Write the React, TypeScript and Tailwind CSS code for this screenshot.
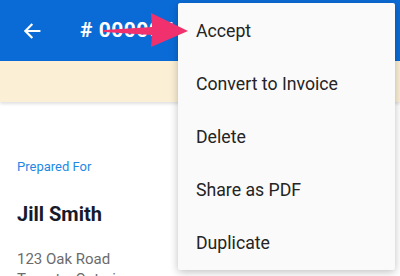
import React from "react";

const items = ["Accept", "Convert to Invoice", "Delete", "Share as PDF", "Duplicate"];

export default function App() {
  return (
    <div className="relative w-[400px] h-[276px] overflow-hidden bg-white" style={{ fontFamily: "Roboto, 'Liberation Sans', sans-serif" }}>
      <div className="h-[61px] bg-[#0b6bd6] flex items-center">
        <div className="w-[80px] flex items-center pl-[21px]">
          <svg width="22" height="22" viewBox="0 0 24 24" fill="none">
            <path d="M20 12H5M11.5 5.2L4.8 12l6.7 6.8" stroke="white" strokeWidth="2.4" strokeLinecap="square" />
          </svg>
        </div>
        <span className="text-white font-bold text-[21px] leading-none tracking-[0.5px]">#&nbsp;000005</span>
      </div>
      <div className="h-[41px] bg-[#fbf0d5] shadow-[0_2px_3px_rgba(0,0,0,0.12)]" />
      <div className="pl-[17px] pt-[57px]">
        <div className="text-[13px] leading-[16px] text-[#1e88e5]">Prepared For</div>
        <div className="mt-[28px] text-[20px] leading-[22px] font-bold text-[#171a2b]">Jill Smith</div>
        <div className="mt-[24px] text-[15px] leading-[20px] text-[#6b6b6b]">123 Oak Road</div>
        <div className="text-[15px] leading-[20px] text-[#6b6b6b]">Toronto, Ontario</div>
      </div>

      <div className="absolute left-[178px] top-[3px] w-[217px] h-[267px] bg-[#fafafa] rounded-[2px] shadow-[0_2px_8px_rgba(0,0,0,0.25)] py-[2px]">
        {items.map((t) => (
          <div key={t} className="h-[53px] flex items-center pl-[18px] text-[17.7px] text-[#242424]">
            {t}
          </div>
        ))}
      </div>

      <svg className="absolute left-0 top-0" width="400" height="276" viewBox="0 0 400 276">
        <polygon points="104,30 152,27 151,13 188,31 151,47 152,35 104,32" fill="#f0316d" />
      </svg>
    </div>
  );
}
